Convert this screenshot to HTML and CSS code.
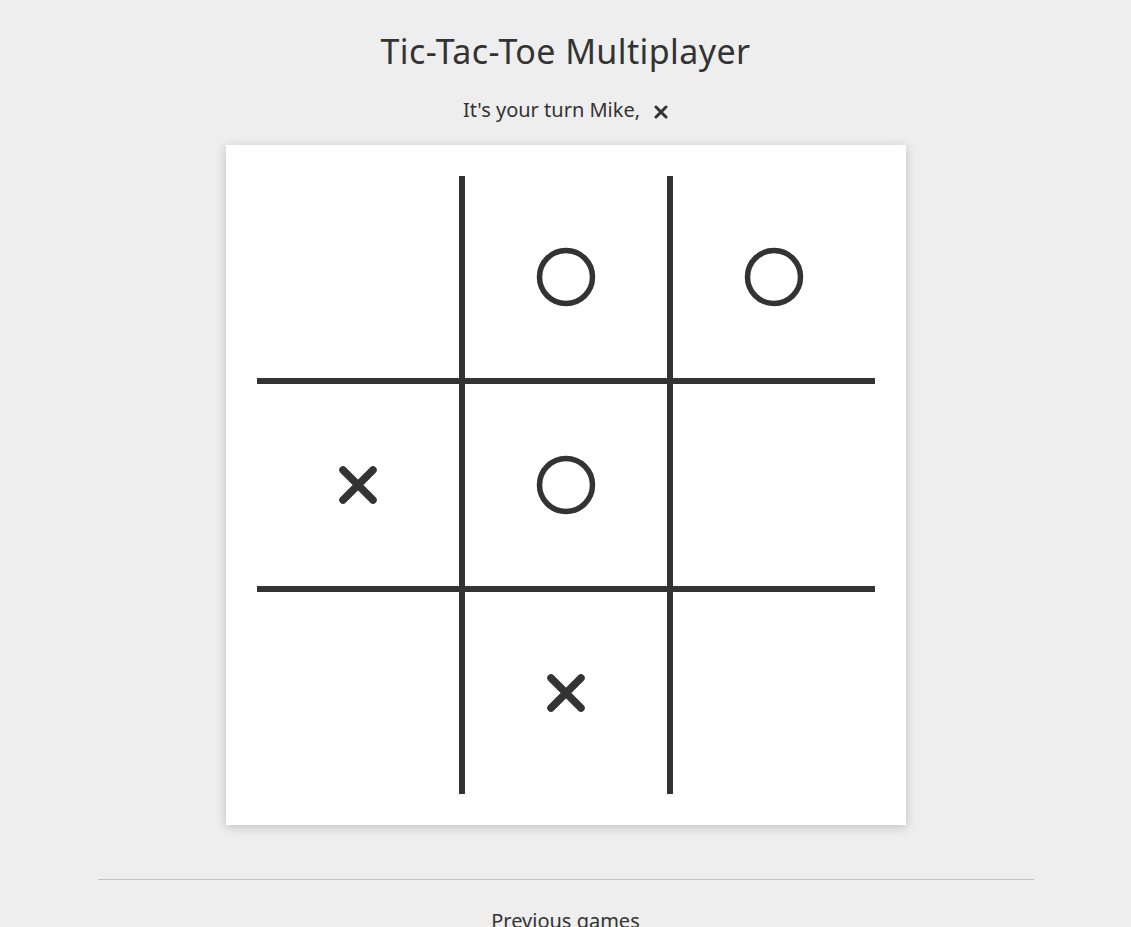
FILE: index.html
```html
<!DOCTYPE html>
<html lang="en">
<head>
<meta charset="utf-8">
<title>Tic-Tac-Toe Multiplayer</title>
<link rel="stylesheet" href="styles.css">
</head>
<body>
<main class="page">
  <h1 class="title">Tic-Tac-Toe Multiplayer</h1>
  <p class="turn">It's your turn Mike, <svg class="turn-mark" viewBox="0 0 14 14" width="14" height="14"><path d="M2 2 L12 12 M12 2 L2 12" stroke="#333" stroke-width="3" stroke-linecap="round" fill="none"/></svg></p>
  <div class="board">
    <div class="grid">
      <div class="cell"></div>
      <div class="cell"><svg class="o" viewBox="0 0 60 60" width="60" height="60"><circle cx="30" cy="30" r="26.5" stroke="#333" stroke-width="5.5" fill="none"/></svg></div>
      <div class="cell"><svg class="o" viewBox="0 0 60 60" width="60" height="60"><circle cx="30" cy="30" r="26.5" stroke="#333" stroke-width="5.5" fill="none"/></svg></div>
      <div class="cell"><svg class="x" viewBox="0 0 40 40" width="40" height="40"><path d="M5 5 L35 35 M35 5 L5 35" stroke="#333" stroke-width="7.5" stroke-linecap="round" fill="none"/></svg></div>
      <div class="cell"><svg class="o" viewBox="0 0 60 60" width="60" height="60"><circle cx="30" cy="30" r="26.5" stroke="#333" stroke-width="5.5" fill="none"/></svg></div>
      <div class="cell"></div>
      <div class="cell"></div>
      <div class="cell"><svg class="x" viewBox="0 0 40 40" width="40" height="40"><path d="M5 5 L35 35 M35 5 L5 35" stroke="#333" stroke-width="7.5" stroke-linecap="round" fill="none"/></svg></div>
      <div class="cell"></div>
    </div>
  </div>
  <hr class="divider">
  <h2 class="previous">Previous games</h2>
</main>
</body>
</html>
```

FILE: styles.css
```css
html, body {
  margin: 0;
  padding: 0;
  background: #eeeeee;
  color: #333333;
  font-family: "Noto Sans", "Open Sans", sans-serif;
}

.page {
  width: 936px;
  margin: 0 auto;
  padding-top: 27px;
  display: flex;
  flex-direction: column;
  align-items: center;
}

.title {
  margin: 0;
  font-size: 34px;
  font-weight: 400;
  line-height: 48px;
  letter-spacing: 0.4px;
}

.turn {
  margin: 22px 0 0;
  font-size: 20px;
  line-height: 26px;
  display: flex;
  align-items: center;
  gap: 14px;
}

.turn-mark {
  display: block;
  margin-top: 3px;
}

.board {
  margin-top: 22px;
  width: 680px;
  height: 680px;
  box-sizing: border-box;
  padding: 31px;
  background: #ffffff;
  box-shadow: 0 2px 10px rgba(0, 0, 0, 0.2);
}

.grid {
  width: 100%;
  height: 100%;
  display: grid;
  grid-template-columns: repeat(3, 1fr);
  grid-template-rows: repeat(3, 1fr);
  gap: 6px;
  background: #333333;
}

.cell {
  background: #ffffff;
  display: flex;
  align-items: center;
  justify-content: center;
}

.cell svg {
  display: block;
}

.divider {
  width: 100%;
  margin: 54px 0 0;
  border: 0;
  border-top: 1px solid #c2c2c2;
}

.previous {
  margin: 27px 0 0;
  font-size: 20px;
  font-weight: 400;
  line-height: 28px;
}
```
